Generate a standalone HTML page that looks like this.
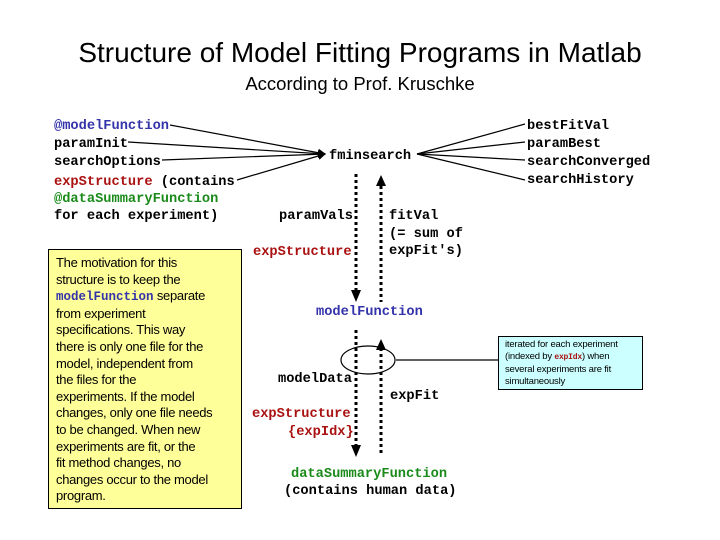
<!DOCTYPE html>
<html><head><style>
body{margin:0;width:720px;height:540px;background:#fff;position:relative;overflow:hidden;font-family:"Liberation Sans",sans-serif}
.t{position:absolute;white-space:nowrap}
.m{position:absolute;white-space:nowrap;font-family:"Liberation Mono",monospace;font-weight:bold;font-size:13.7px;line-height:18px;color:#000;margin-top:2px}
.b{color:#3333aa}.r{color:#aa1111}.g{color:#1a8a1a}
</style></head><body>
<div class="t" style="left:0;width:720px;text-align:center;top:37px;font-size:28px">Structure of Model Fitting Programs in Matlab</div>
<div class="t" style="left:0;width:720px;text-align:center;top:73px;font-size:18.5px">According to Prof. Kruschke</div>

<svg width="720" height="540" style="position:absolute;left:0;top:0">
<defs><marker id="a" markerWidth="8" markerHeight="8" refX="7" refY="4" orient="auto" markerUnits="userSpaceOnUse"><path d="M0,0L8,4L0,8z"/></marker></defs>
<g stroke="#000" stroke-width="1.2" fill="none">
<line x1="170" y1="125" x2="325" y2="154" marker-end="url(#a)"/>
<line x1="128" y1="142" x2="325" y2="154" marker-end="url(#a)"/>
<line x1="162" y1="160" x2="325" y2="154" marker-end="url(#a)"/>
<line x1="237" y1="180" x2="325" y2="154" marker-end="url(#a)"/>
<line x1="417" y1="154" x2="525" y2="124"/>
<line x1="417" y1="154" x2="525" y2="142"/>
<line x1="417" y1="154" x2="525" y2="160"/>
<line x1="417" y1="154" x2="525" y2="180"/>
<line x1="396" y1="360" x2="498" y2="360"/>
<ellipse cx="368" cy="360" rx="27" ry="14"/>
</g>
<g stroke="#000" stroke-width="3" stroke-dasharray="3,3">
<line x1="356" y1="174" x2="356" y2="292"/>
<line x1="381" y1="186" x2="381" y2="302"/>
<line x1="356" y1="330" x2="356" y2="447"/>
<line x1="381" y1="348" x2="381" y2="456"/>
</g>
<path d="M351,290L361,290L356,302z"/>
<path d="M376,186L386,186L381,175z"/>
<path d="M351,445L361,445L356,457z"/>
<path d="M376,350L386,350L381,339z"/>
</svg>

<div class="m b" style="left:54px;top:116px">@modelFunction</div>
<div class="m" style="left:54px;top:134px">paramInit</div>
<div class="m" style="left:54px;top:152px">searchOptions</div>
<div class="m" style="left:54px;top:172px"><span class="r">expStructure</span> (contains</div>
<div class="m g" style="left:54px;top:189px">@dataSummaryFunction</div>
<div class="m" style="left:54px;top:206px">for each experiment)</div>
<div class="m" style="left:329px;top:146px">fminsearch</div>
<div class="m" style="left:527px;top:116px">bestFitVal</div>
<div class="m" style="left:527px;top:134px">paramBest</div>
<div class="m" style="left:527px;top:152px">searchConverged</div>
<div class="m" style="left:527px;top:170px">searchHistory</div>
<div class="m" style="left:279px;top:206px">paramVals</div>
<div class="m r" style="left:253px;top:242px">expStructure</div>
<div class="m" style="left:389px;top:206px">fitVal</div>
<div class="m" style="left:389px;top:224px">(= sum of</div>
<div class="m" style="left:389px;top:241px">expFit's)</div>
<div class="m b" style="left:316px;top:302px">modelFunction</div>
<div class="m" style="left:278px;top:369px">modelData</div>
<div class="m" style="left:390px;top:386px">expFit</div>
<div class="m r" style="left:252px;top:404px">expStructure</div>
<div class="m r" style="left:288px;top:422px">{expIdx}</div>
<div class="m g" style="left:291px;top:464px">dataSummaryFunction</div>
<div class="m" style="left:284px;top:481px">(contains human data)</div>

<div style="position:absolute;left:48px;top:249px;width:194px;height:260px;background:#ffff99;border:1px solid #000;font-size:13px;line-height:16.6px;padding:5px 0 0 7px;box-sizing:border-box;letter-spacing:-0.3px">
The motivation for this<br>structure is to keep the<br><span style="font-family:'Liberation Mono',monospace;font-weight:bold;color:#3333aa;font-size:12.5px;letter-spacing:0">modelFunction</span> separate<br>from experiment<br>specifications. This way<br>there is only one file for the<br>model, independent from<br>the files for the<br>experiments. If the model<br>changes, only one file needs<br>to be changed. When new<br>experiments are fit, or the<br>fit method changes, no<br>changes occur to the model<br>program.</div>

<div style="position:absolute;left:498px;top:336px;width:145px;height:54px;background:#ccffff;border:1px solid #000;box-sizing:border-box;font-size:9.5px;line-height:12px;padding:2px 0 0 6px;letter-spacing:-0.2px">iterated for each experiment<br>(indexed by <span style="font-family:'Liberation Mono',monospace;font-weight:bold;color:#aa1111;font-size:8px">expIdx</span>) when<br>several experiments are fit<br>simultaneously</div>
</body></html>
